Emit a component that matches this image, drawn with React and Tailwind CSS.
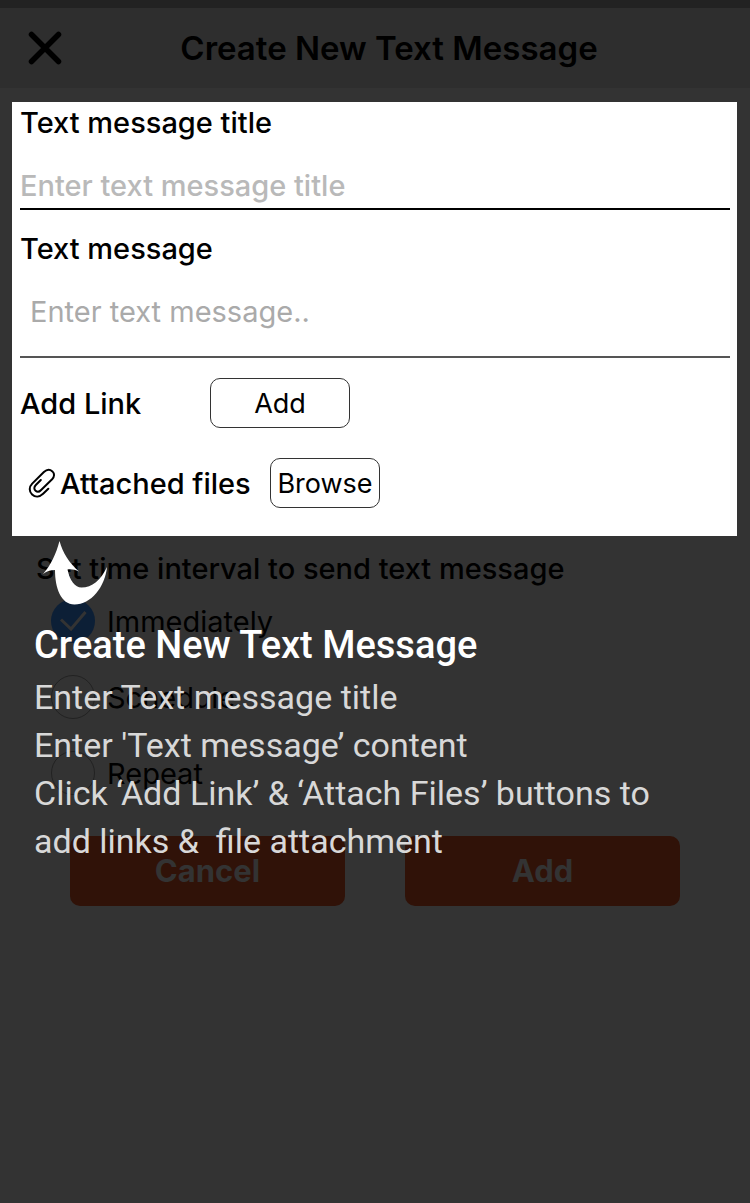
import React from "react";

const labelText = "text-[29px] leading-9 font-medium text-black";

function CloseIcon() {
  return (
    <svg viewBox="0 0 34 34" className="h-[34px] w-[34px]" fill="none" stroke="currentColor" strokeWidth="5.5" strokeLinecap="round" aria-hidden="true">
      <path d="M3.5 3.5 30.5 30.5M30.5 3.5 3.5 30.5" />
    </svg>
  );
}

function PaperclipIcon() {
  return (
    <svg viewBox="0 0 28 30" className="h-[30px] w-7" fill="none" stroke="currentColor" strokeWidth="2" strokeLinecap="round" strokeLinejoin="round" aria-hidden="true">
      <path d="M20.3 20.8 15.1 25.8C11.7 29 7.2 29.3 4.1 26.4C0.9 23.4 1 18.800 4.2 15.600L15.900 4C18.700 1.400 22.100 1.300 24.400 3.400C26.700 5.600 26.500 8.800 24.100 11.300L13.100 22C11.300 24 9.200 24.200 7.600 22.800C5.800 21.200 6 18.800 7.800 17L12.800 12" />
    </svg>
  );
}

function ArrowIcon() {
  return (
    <svg viewBox="0 0 66 64" className="h-16 w-[66px]" fill="#fff" aria-hidden="true">
      <path d="M17.5 0C21 12 27 22 37 30.5C33 28.500 29 28 25.500 28.500C28 40 33 46.500 39.500 46.500C50 46.500 59 39 65 26C63 46 49 63.500 32.500 63.500C19 63.500 13 47 13 29C8 29 4.500 30.500 1 33C9 24 14 13 17.500 0Z" />
    </svg>
  );
}

function Option({ id, label, checked }) {
  return (
    <label htmlFor={id} className="flex h-11 items-center gap-3">
      <span className="relative h-11 w-11 shrink-0">
        <input
          id={id}
          type="radio"
          name="interval"
          defaultChecked={checked}
          className="block h-11 w-11 appearance-none rounded-full border border-[#222] checked:border-0 checked:bg-[#0c1f36]"
        />
        {checked && (
          <svg viewBox="0 0 44 44" className="pointer-events-none absolute inset-0 h-11 w-11" fill="none" stroke="#333" strokeWidth="3" aria-hidden="true">
            <path d="M10 20.5 20 30 34.5 13" />
          </svg>
        )}
      </span>
      <span className="pt-0.5 text-[29px] leading-9 text-black">{label}</span>
    </label>
  );
}

export default function App() {
  return (
    <main className="relative min-h-screen bg-[#333] font-['Inter','Liberation_Sans',sans-serif] text-black">
      <div className="h-2 bg-[#222]" />
      <header className="relative flex h-20 items-center justify-center bg-[#2e2e2e] pl-7">
        <button type="button" aria-label="Close" className="absolute left-7">
          <CloseIcon />
        </button>
        <h1 className="text-[33px] leading-10 font-semibold">Create New Text Message</h1>
      </header>

      <section className="mx-3 mt-3.5 mr-[13px] flex flex-col bg-white pt-[3px] pr-[7px] pb-7 pl-2">
        <label htmlFor="title" className={labelText}>Text message title</label>
        <input
          id="title"
          type="text"
          placeholder="Enter text message title"
          className="mt-3 h-[57px] w-full border-b-2 border-black pt-2.5 text-[29px] font-medium outline-none placeholder:text-[#b9b9b9]"
        />
        <label htmlFor="message" className={"mt-[21px] " + labelText}>Text message</label>
        <textarea
          id="message"
          rows="1"
          placeholder="Enter text message.."
          className="mt-[11px] block h-20 w-full resize-none border-b-2 border-[#555] px-2.5 pt-4 text-[29px] leading-9 outline-none placeholder:text-[#aaa]"
        />
        <div className="mt-5 flex h-[50px] items-center">
          <label htmlFor="add-link" className={"w-[190px] pt-0.5 " + labelText}>Add Link</label>
          <button id="add-link" type="button" className="h-[50px] w-[140px] rounded-[10px] border border-[#333] pt-0.5 text-[27px] leading-9">Add</button>
        </div>
        <div className="mt-[30px] flex h-[50px] items-center pl-2">
          <PaperclipIcon />
          <label htmlFor="browse" className={"w-[214px] pt-0.5 pl-1 whitespace-nowrap " + labelText}>Attached files</label>
          <button id="browse" type="button" className="h-[50px] w-[110px] rounded-[10px] border border-[#333] pt-0.5 text-[27px] leading-9">Browse</button>
        </div>
      </section>

      <fieldset className="mt-[15px] px-9">
        <legend className="text-[29px] leading-9 font-medium">Set time interval to send text message</legend>
        <div className="flex flex-col gap-8 pt-3 pl-[15px]">
          <Option id="now" label="Immediately" checked />
          <Option id="schedule" label="Schedule" />
          <Option id="repeat" label="Repeat" />
        </div>
      </fieldset>

      <div className="mt-[41px] grid grid-cols-2 gap-[60px] px-[70px]">
        <button type="button" className="h-[70px] rounded-[10px] bg-[#301208] text-[31px] leading-10 font-bold text-[#333]">Cancel</button>
        <button type="button" className="h-[70px] rounded-[10px] bg-[#301208] text-[31px] leading-10 font-bold text-[#333]">Add</button>
      </div>

      <aside className="pointer-events-none absolute top-[541px] right-0 left-0 px-[34px] font-['Roboto',sans-serif]">
        <div className="pl-2">
          <ArrowIcon />
        </div>
        <h2 className="mt-4 text-[38px] leading-[48px] font-medium text-white">Create New Text Message</h2>
        <div className="mt-1 text-[34px] leading-[48px] text-[#d8d8d8]">
          <p>Enter Text message title</p>
          <p>Enter 'Text message’ content</p>
          <p className="whitespace-pre-line">{"Click ‘Add Link’ & ‘Attach Files’ buttons to\nadd links &\u00a0 file attachment"}</p>
        </div>
      </aside>
    </main>
  );
}
